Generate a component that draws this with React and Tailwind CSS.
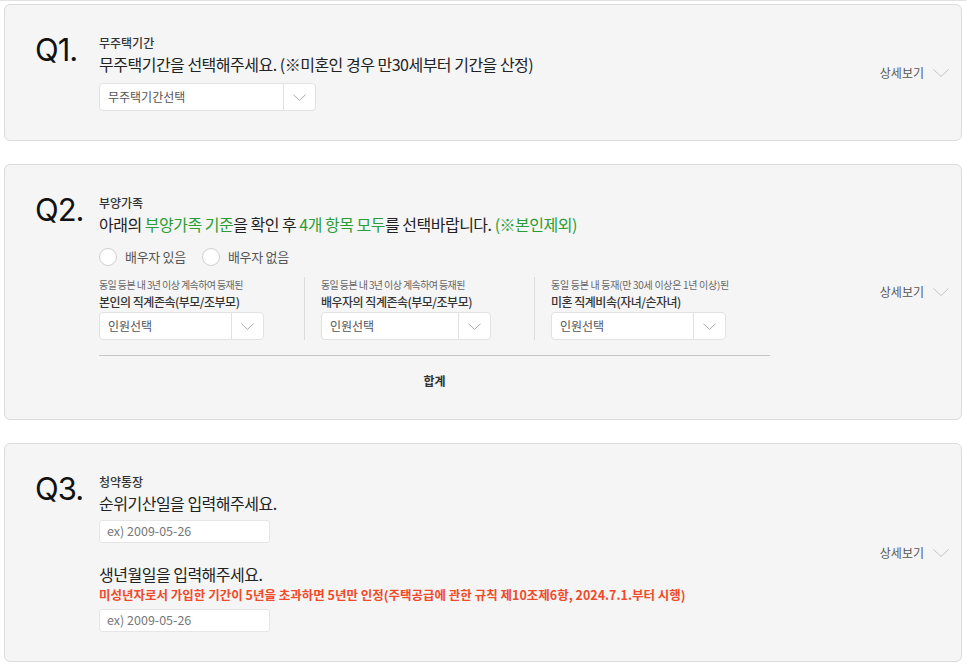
import React from 'react';

const font = { fontFamily: '"Noto Sans CJK KR", "Noto Sans", sans-serif' };

const Chevron = ({ className = 'w-[13px] h-[7px] text-[#9a9a9a]' }) => (
  <svg className={className} viewBox="0 0 16 8" fill="none" stroke="currentColor" strokeWidth="1">
    <polyline points="0.5,0.5 8,7.5 15.5,0.5" />
  </svg>
);

const Select = ({ label, width }) => (
  <div className={`flex h-[28px] bg-white border border-[#e2e2e2] rounded-[4px] ${width}`}>
    <div className="flex-1 flex items-center pl-[8px] text-[12px] text-[#555]">{label}</div>
    <div className="w-[32px] border-l border-[#e2e2e2] flex items-center justify-center">
      <Chevron />
    </div>
  </div>
);

const DateInput = () => (
  <div className="mt-[5px] w-[171px] h-[23px] bg-white border border-[#e6e6e6] rounded-[3px] flex items-center pl-[7px] text-[12.5px] text-[#777]">
    ex) 2009-05-26
  </div>
);

const Card = ({ num, children }) => (
  <div className="flex bg-[#f5f5f5] border border-[#dcdcdc] rounded-[6px] pl-[30px] pr-[12px] pt-[29px] pb-[29px]">
    <div
      className="w-[64px] shrink-0 text-[31px] leading-none tracking-[-1px] text-[#111]"
      style={{ fontFamily: 'Inter, "Noto Sans", sans-serif' }}
    >
      {num}
    </div>
    <div className="flex-1">{children}</div>
    <div className="flex items-center gap-[9px] text-[12px] text-[#555]">
      <span>상세보기</span>
      <Chevron className="w-[16px] h-[8px] text-[#c4c4c4]" />
    </div>
  </div>
);

const Radio = ({ label }) => (
  <label className="flex items-center gap-[8px] text-[13px] text-[#555] tracking-[-0.3px]">
    <span className="w-[18px] h-[18px] rounded-full bg-white border border-[#cfcfcf]"></span>
    {label}
  </label>
);

const App = () => {
  const groups = [
    { sub: '동일 등본 내 3년 이상 계속하여 등재된', title: '본인의 직계존속(부모/조부모)', box: 'w-[206px] pr-[41px] border-r', sel: 'w-[165px]', track: 'tracking-[-0.6px]' },
    { sub: '동일 등본 내 3년 이상 계속하여 등재된', title: '배우자의 직계존속(부모/조부모)', box: 'w-[230px] pl-[16px] pr-[44px] border-r', sel: 'w-[170px]', track: 'tracking-[-0.6px]' },
    { sub: '동일 등본 내 등재(만 30세 이상은 1년 이상)된', title: '미혼 직계비속(자녀/손자녀)', box: 'pl-[16px]', sel: 'w-[175px]', track: 'tracking-[-0.3px]' },
  ];

  return (
    <div className="min-h-screen bg-white px-[4px] pt-[3px] pb-[4px] border-t border-[#e2e2e2]" style={font}>
      <div className="flex flex-col gap-[23px]">
        {/* Q1 */}
        <Card num="Q1.">
          <p className="text-[12px] leading-[18px] text-[#333] font-medium">무주택기간</p>
          <p className="text-[16px] leading-[24px] text-[#222] tracking-[-0.5px]">
            무주택기간을 선택해주세요. (※미혼인 경우 만30세부터 기간을 산정)
          </p>
          <div className="mt-[7px]">
            <Select label="무주택기간선택" width="w-[217px]" />
          </div>
        </Card>

        {/* Q2 */}
        <Card num="Q2.">
          <p className="text-[12px] leading-[18px] text-[#333] font-medium">부양가족</p>
          <p className="text-[16px] leading-[24px] text-[#222] tracking-[-0.5px]">
            아래의 <span className="text-[#2a9d36]">부양가족 기준</span>을 확인 후{' '}
            <span className="text-[#2a9d36]">4개 항목 모두</span>를 선택바랍니다.{' '}
            <span className="text-[#2a9d36]">(※본인제외)</span>
          </p>
          <div className="mt-[12px] flex items-center gap-[16px] h-[18px]">
            <Radio label="배우자 있음" />
            <Radio label="배우자 없음" />
          </div>
          <div className="mt-[11px] w-[671px]">
            <div className="flex">
              {groups.map((g) => (
                <div key={g.title} className={`border-[#dcdcdc] ${g.box}`}>
                  <p className={`text-[10px] leading-[16px] text-[#666] whitespace-nowrap ${g.track}`}>{g.sub}</p>
                  <p className="text-[12px] leading-[18px] text-[#333] font-medium tracking-[-0.5px]">{g.title}</p>
                  <div className="mt-[1px]">
                    <Select label="인원선택" width={g.sel} />
                  </div>
                </div>
              ))}
            </div>
            <div className="mt-[15px] border-t border-[#c8c8c8]"></div>
            <p className="mt-[16px] text-center text-[12px] leading-[18px] font-bold text-[#333]">합계</p>
          </div>
        </Card>

        {/* Q3 */}
        <Card num="Q3.">
          <p className="text-[12px] leading-[18px] text-[#333] font-medium">청약통장</p>
          <p className="text-[16px] leading-[24px] text-[#222] tracking-[-0.5px]">순위기산일을 입력해주세요.</p>
          <DateInput />
          <p className="mt-[19px] text-[16px] leading-[24px] text-[#222] tracking-[-0.5px]">생년월일을 입력해주세요.</p>
          <p className="text-[12.5px] leading-[18px] font-bold text-[#f04a2a]">
            미성년자로서 가입한 기간이 5년을 초과하면 5년만 인정(주택공급에 관한 규칙 제10조제6항, 2024.7.1.부터 시행)
          </p>
          <DateInput />
        </Card>
      </div>
    </div>
  );
};

export default App;
